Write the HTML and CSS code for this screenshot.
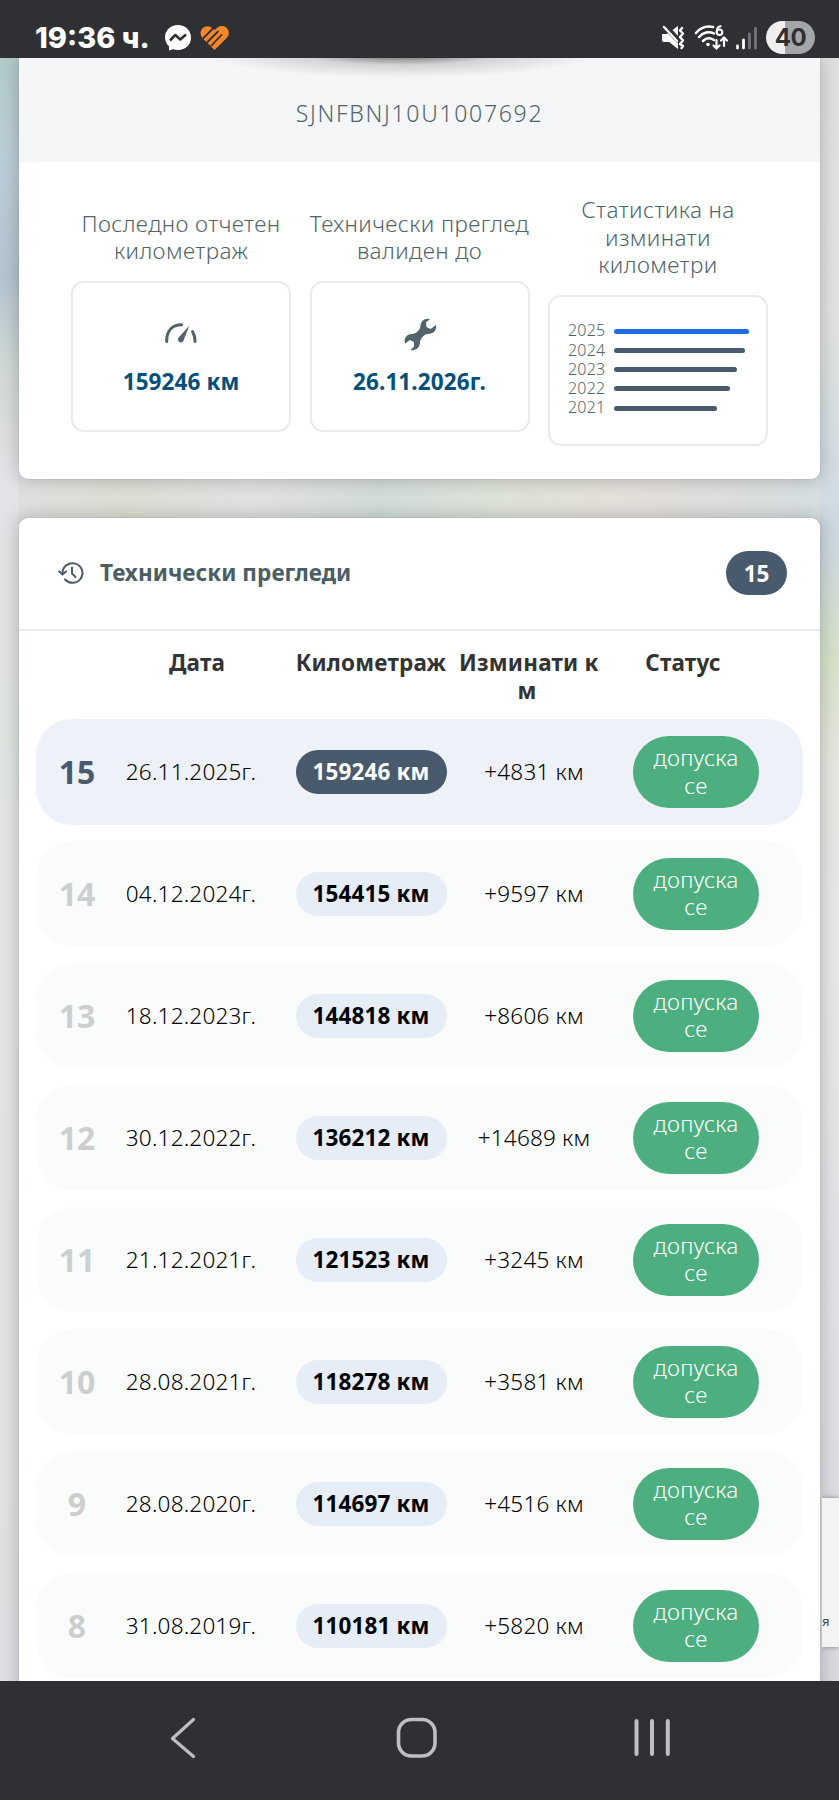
FILE: index.html
```html
<!DOCTYPE html>
<html lang="bg">
<head>
  <meta charset="UTF-8">
  <meta name="viewport" content="width=device-width, initial-scale=1.0">
  <title>Технически прегледи</title>
  <link rel="stylesheet" href="styles.css">
</head>
<body>
  <header class="status-bar">
    <span class="clock">19:36 ч.</span>
    <svg class="messenger" width="28" height="28" viewBox="0 0 28 28">
      <path fill="#fff" d="M14 1C6.700 1 1 6.300 1 13.300c0 3.700 1.500 6.800 4 9v4.200l4-1.200c1.600.5 3.200.8 5 .8 7.300 0 13-5.200 13-12.500S21.300 1 14 1z"/>
      <path fill="none" stroke="#2f3034" stroke-width="2.600" stroke-linejoin="round" d="M6 16.500l5.300-5.500 5 4.500 5.700-5"/>
    </svg>
    <svg class="heart" width="30" height="26" viewBox="0 0 30 26">
      <path fill="#f5872b" d="M14.500 25L2.500 13C0 10.200 0 6 2.500 3.300 5.300.5 10 .5 12.500 3.300l2 1.700 2.500-2C20 .3 24.500.5 27 3.300s2.500 7-.3 9.700z"/>
      <g fill="none" stroke="#2f3034" stroke-width="1.800" stroke-linecap="round">
        <path d="M3.500 13L13.500 3"/>
        <path d="M7.500 17L18 6.500"/>
        <path d="M11.500 20.500l10-10.500"/>
      </g>
    </svg>
    <div class="status-right">
      <svg width="24" height="26" viewBox="0 0 24 26">
        <path fill="#fff" d="M1 9h5l11-8v23l-9-7H3c-1.500 0-2-.8-2-2z"/>
        <path stroke="#2f3034" stroke-width="5.500" d="M2-1l16 17"/>
        <path stroke="#fff" stroke-width="2.400" stroke-linecap="round" d="M3 2l13 14"/>
        <path fill="none" stroke="#fff" stroke-width="2.400" stroke-linecap="round" stroke-linejoin="round" d="M21 3l-2 2.500 3 3-3 3.500 3 3.500-3 3.500 3 2-1.500 2"/>
      </svg>
      <svg class="wifi" width="34" height="27" viewBox="0 0 34 27">
        <g fill="none" stroke="#fff" stroke-width="2.500" stroke-linecap="round">
          <path d="M2 9C7 3 14 2 19 3"/>
          <path d="M5 13c4-5 10-6 15-3.500"/>
          <path d="M9 17c3-3 7-3.500 11-1"/>
          <path stroke-width="2.200" d="M22.500 16v8m-3-2.500l3 3 3-3M30 22v-8m-3 2.500l3-3 3 3"/>
          <circle cx="25.500" cy="8.300" r="2.800" stroke-width="2"/>
          <path stroke-width="2" d="M22.700 8c0-3 1-5.500 4-5.800"/>
        </g>
        <circle cx="14" cy="20.500" r="1.800" fill="#fff"/>
      </svg>
      <svg class="signal" width="22" height="24" viewBox="0 0 22 24">
        <g stroke-width="2.800" stroke-linecap="round">
          <path stroke="#fff" d="M1.500 20v2M7.500 14v8"/>
          <path stroke="#737478" d="M13.500 8v14M19.500 2.500V22"/>
        </g>
      </svg>
      <span class="battery">40</span>
    </div>
  </header>

  <main class="page">
    <section class="card summary">
      <div class="vin">SJNFBNJ10U1007692</div>
      <div class="stats">
        <div class="stat">
          <p class="stat-label">Последно отчетен километраж</p>
          <div class="stat-box">
            <svg width="34" height="34" viewBox="0 0 34 34">
              <g fill="none" stroke="#50646a" stroke-width="3" stroke-linecap="round">
                <path d="M2.700 24.500C2.500 14 8 8 17.500 7.800"/>
                <path d="M28.500 14.500c1.800 3 2.500 6 2.600 10"/>
              </g>
              <path fill="#50646a" d="M25.500 8.500L19.500 23.500c-1 3-5.500 2.500-5.500-1 0-1.500 1-2.500 2-3.500z"/>
            </svg>
            <strong>159246 км</strong>
          </div>
        </div>
        <div class="stat">
          <p class="stat-label">Технически преглед валиден до</p>
          <div class="stat-box">
            <svg width="34" height="34" viewBox="0 0 34 34">
              <path fill="#50646a" d="M27 2c-5-1.500-9.500 2-9.500 7 0 3.500-4.500 8-8.500 8-5.500 0-8.500 5-7 9.500l5-3.500 4 2v4.500l-3.500 3.500c5.500 1 9.500-2.500 9.500-7.500 0-3.500 4-8.500 8-8.500 5.500 0 9-4 8-9l-5.500 4-4-2-.5-4.500z"/>
            </svg>
            <strong>26.11.2026г.</strong>
          </div>
        </div>
        <div class="stat">
          <p class="stat-label">Статистика на изминати километри</p>
          <div class="stat-box chart">
            <div class="bar-row"><span>2025</span><i class="bar current" style="width: 135px"></i></div>
            <div class="bar-row"><span>2024</span><i class="bar" style="width: 131px"></i></div>
            <div class="bar-row"><span>2023</span><i class="bar" style="width: 123px"></i></div>
            <div class="bar-row"><span>2022</span><i class="bar" style="width: 116px"></i></div>
            <div class="bar-row"><span>2021</span><i class="bar" style="width: 103px"></i></div>
          </div>
        </div>
      </div>
    </section>

    <section class="card history">
      <div class="history-head">
        <svg width="26" height="24" viewBox="0 0 26 24">
          <g fill="none" stroke="#4a5e64" stroke-width="2" stroke-linecap="round" stroke-linejoin="round">
            <path d="M4.500 12A10 9.800 0 1 1 7 18.500"/>
            <path d="M1.300 10.500l3.200 3 3.500-3"/>
            <path d="M14 6.500v6l3.500 3.500"/>
          </g>
        </svg>
        <h2>Технически прегледи</h2>
        <span class="count">15</span>
      </div>
      <div class="table-head">
        <span>Дата</span>
        <span>Километраж</span>
        <span>Изминати к<br>м</span>
        <span>Статус</span>
      </div>
      <div class="rows">
        <div class="row latest">
          <b class="num">15</b><span class="date">26.11.2025г.</span><b class="km">159246 км</b><span class="diff">+4831 км</span><span class="state">допуска се</span>
        </div>
        <div class="row">
          <b class="num">14</b><span class="date">04.12.2024г.</span><b class="km">154415 км</b><span class="diff">+9597 км</span><span class="state">допуска се</span>
        </div>
        <div class="row">
          <b class="num">13</b><span class="date">18.12.2023г.</span><b class="km">144818 км</b><span class="diff">+8606 км</span><span class="state">допуска се</span>
        </div>
        <div class="row">
          <b class="num">12</b><span class="date">30.12.2022г.</span><b class="km">136212 км</b><span class="diff">+14689 км</span><span class="state">допуска се</span>
        </div>
        <div class="row">
          <b class="num">11</b><span class="date">21.12.2021г.</span><b class="km">121523 км</b><span class="diff">+3245 км</span><span class="state">допуска се</span>
        </div>
        <div class="row">
          <b class="num">10</b><span class="date">28.08.2021г.</span><b class="km">118278 км</b><span class="diff">+3581 км</span><span class="state">допуска се</span>
        </div>
        <div class="row">
          <b class="num">9</b><span class="date">28.08.2020г.</span><b class="km">114697 км</b><span class="diff">+4516 км</span><span class="state">допуска се</span>
        </div>
        <div class="row">
          <b class="num">8</b><span class="date">31.08.2019г.</span><b class="km">110181 км</b><span class="diff">+5820 км</span><span class="state">допуска се</span>
        </div>
      </div>
    </section>
    <aside class="captcha">я</aside>
  </main>

  <nav class="nav-bar">
    <svg width="839" height="119" viewBox="0 0 839 119" fill="none" stroke="#bfbfc1" stroke-linecap="round">
      <path stroke-width="3.200" stroke-linejoin="round" d="M193.500 38.500L172.500 57.500l21 18"/>
      <rect x="398.500" y="38.500" width="36.500" height="36.500" rx="13" stroke-width="3.600"/>
      <path stroke-width="4" d="M636.500 40v33M652 40v33M667.800 40v33"/>
    </svg>
  </nav>
</body>
</html>
```

FILE: styles.css
```css
* {
  box-sizing: border-box;
}
body {
  margin: 0;
  width: 839px;
  height: 1800px;
  display: flex;
  flex-direction: column;
  overflow: hidden;
  font-family: "Noto Sans", "Open Sans", sans-serif;
  font-size: 22.500px;
  font-weight: 300;
  line-height: 27.500px;
  color: #000;
}

/* system bars */
.status-bar {
  height: 58px;
  flex: none;
  display: flex;
  align-items: center;
  padding: 17px 24px 0 35px;
  background: #2f3034;
  color: #fff;
}
.clock {
  width: 129px;
  font: 800 29px/40px Inter, sans-serif;
  white-space: nowrap;
}
.heart {
  margin-left: 8px;
}
.status-right {
  display: flex;
  align-items: center;
  margin-left: auto;
}
.wifi {
  margin-left: 9px;
}
.signal {
  margin: 0 8px;
}
.battery {
  width: 49px;
  height: 33px;
  border-radius: 17px;
  background: linear-gradient(90deg, #efefef 19px, #a5a6a8 19px);
  color: #2f3034;
  font: 700 24px/33px Inter, sans-serif;
  letter-spacing: -0.500px;
  text-align: center;
}
.nav-bar {
  height: 119px;
  flex: none;
  background: #2f3034;
}
.nav-bar svg {
  display: block;
}

/* page */
.page {
  position: relative;
  flex: 1;
  min-height: 0;
  overflow: hidden;
  padding: 0 19px;
  background:
    linear-gradient(#b4cccb 0, #bccfd8 100px, #b5c5d0 220px, #cfd8d6 300px, #e6e3e8 420px, #e2e2e4 560px, #dfe6e0 680px, #e6e6e6 800px, #dfe1e4 100%) left / 19px 100% no-repeat,
    linear-gradient(#e0e0e0 0, #e3e3e2 250px, #d6dfe2 380px, #cdd8e3 480px, #d8e2c8 600px, #e5e7e0 700px, #e8e8ea 900px, #d9dbe0 100%) right / 19px 100% no-repeat,
    linear-gradient(90deg, #e2e0e2, #dbdfd4 15%, #e2e2e2 30%, #d3dcda 45%, #dde3d9 58%, #e5dfda 75%, #d5dfe3);
}
.card {
  background: #fff;
  box-shadow: 0 0 18px 2px rgba(0, 0, 0, 0.2), 0 0 0 1px rgba(0, 0, 0, 0.04);
}
.summary {
  height: 421px;
  border-radius: 0 0 9px 9px;
}
.vin {
  height: 104px;
  padding-top: 42px;
  text-align: center;
  color: #50646a;
  font-size: 23px;
  letter-spacing: 1.700px;
  background: radial-gradient(ellipse 200px 26px at 382px -6px, rgba(60, 60, 60, 0.9), rgba(130, 130, 130, 0.3) 50%, transparent), #f4f6f8;
}
.stats {
  display: grid;
  grid-template-columns: repeat(3, 220px);
  gap: 18.500px;
  align-items: center;
  padding: 34px 52px 0;
}
.stat-label {
  margin: 0 0 16px;
  text-align: center;
  letter-spacing: 0.400px;
  color: #50646a;
}
.stat-box {
  height: 151px;
  display: flex;
  flex-direction: column;
  align-items: center;
  border: 2px solid #eaeaea;
  border-radius: 13px;
  padding-top: 34px;
}
.stat-box strong {
  margin-top: 17px;
  color: #05507a;
  font-weight: 700;
  letter-spacing: 0.100px;
}
.chart {
  align-items: flex-start;
  padding: 25px 0 0 18px;
}
.bar-row {
  display: flex;
  align-items: center;
  height: 19.250px;
  font-size: 16px;
  letter-spacing: 0.200px;
  color: #50646a;
}
.bar-row span {
  width: 46px;
}
.bar {
  height: 5px;
  border-radius: 3px;
  background: #485a6b;
}
.bar.current {
  background: #1d6be0;
}

.history {
  height: 1200px;
  margin-top: 39px;
  border-radius: 9px;
}
.history-head {
  height: 113px;
  display: flex;
  align-items: center;
  padding: 0 33px 2px 39px;
  border-bottom: 2px solid #e9eaea;
}
.history-head h2 {
  margin: 1px 0 0 16px;
  font-size: 22.500px;
  font-weight: 700;
  letter-spacing: 0.050px;
  color: #4a5e64;
}
.count {
  margin-left: auto;
  width: 61px;
  height: 44px;
  border-radius: 22px;
  background: #485a6b;
  color: #fff;
  font-weight: 700;
  line-height: 45px;
  text-align: center;
}
.table-head {
  display: grid;
  grid-template-columns: 172px 176px 136px 176px;
  height: 88px;
  padding: 18px 0 0 92px;
  font-weight: 700;
  letter-spacing: 0.200px;
  color: #333;
  text-align: center;
  white-space: nowrap;
}
.rows {
  padding: 0 17px;
}
.row {
  display: grid;
  grid-template-columns: 82px 146px 214px 112px 212px;
  align-items: center;
  justify-items: center;
  height: 105px;
  margin-bottom: 17px;
  border-radius: 36px;
  background: #fafcfb;
  white-space: nowrap;
}
.row.latest {
  height: 106px;
  margin-bottom: 16px;
  background: #eef1f7;
}
.num {
  font-size: 32px;
  font-weight: 700;
  color: #cdcfcf;
}
.latest .num {
  color: #485a6b;
}
.date,
.diff {
  letter-spacing: 0.200px;
}
.km {
  width: 151px;
  height: 44px;
  border-radius: 22px;
  background: #e7edf7;
  font-weight: 700;
  line-height: 44px;
  letter-spacing: 0.150px;
  text-align: center;
}
.latest .km {
  background: #485a6b;
  color: #fff;
}
.state {
  width: 126px;
  height: 72px;
  padding: 8px 18px;
  border-radius: 36px;
  background: #4dae80;
  color: #fff;
  letter-spacing: 0.300px;
  text-align: center;
  white-space: normal;
}

/* badge peeking from the right edge */
.captcha {
  position: absolute;
  right: 0;
  top: 1440px;
  width: 17px;
  height: 149px;
  padding: 110px 0 0;
  background: #f3f3f3;
  box-shadow: 0 0 5px #808080;
  clip-path: inset(-8px 0 -8px 0);
  font-size: 13px;
  font-weight: 400;
  color: #444;
}
```
